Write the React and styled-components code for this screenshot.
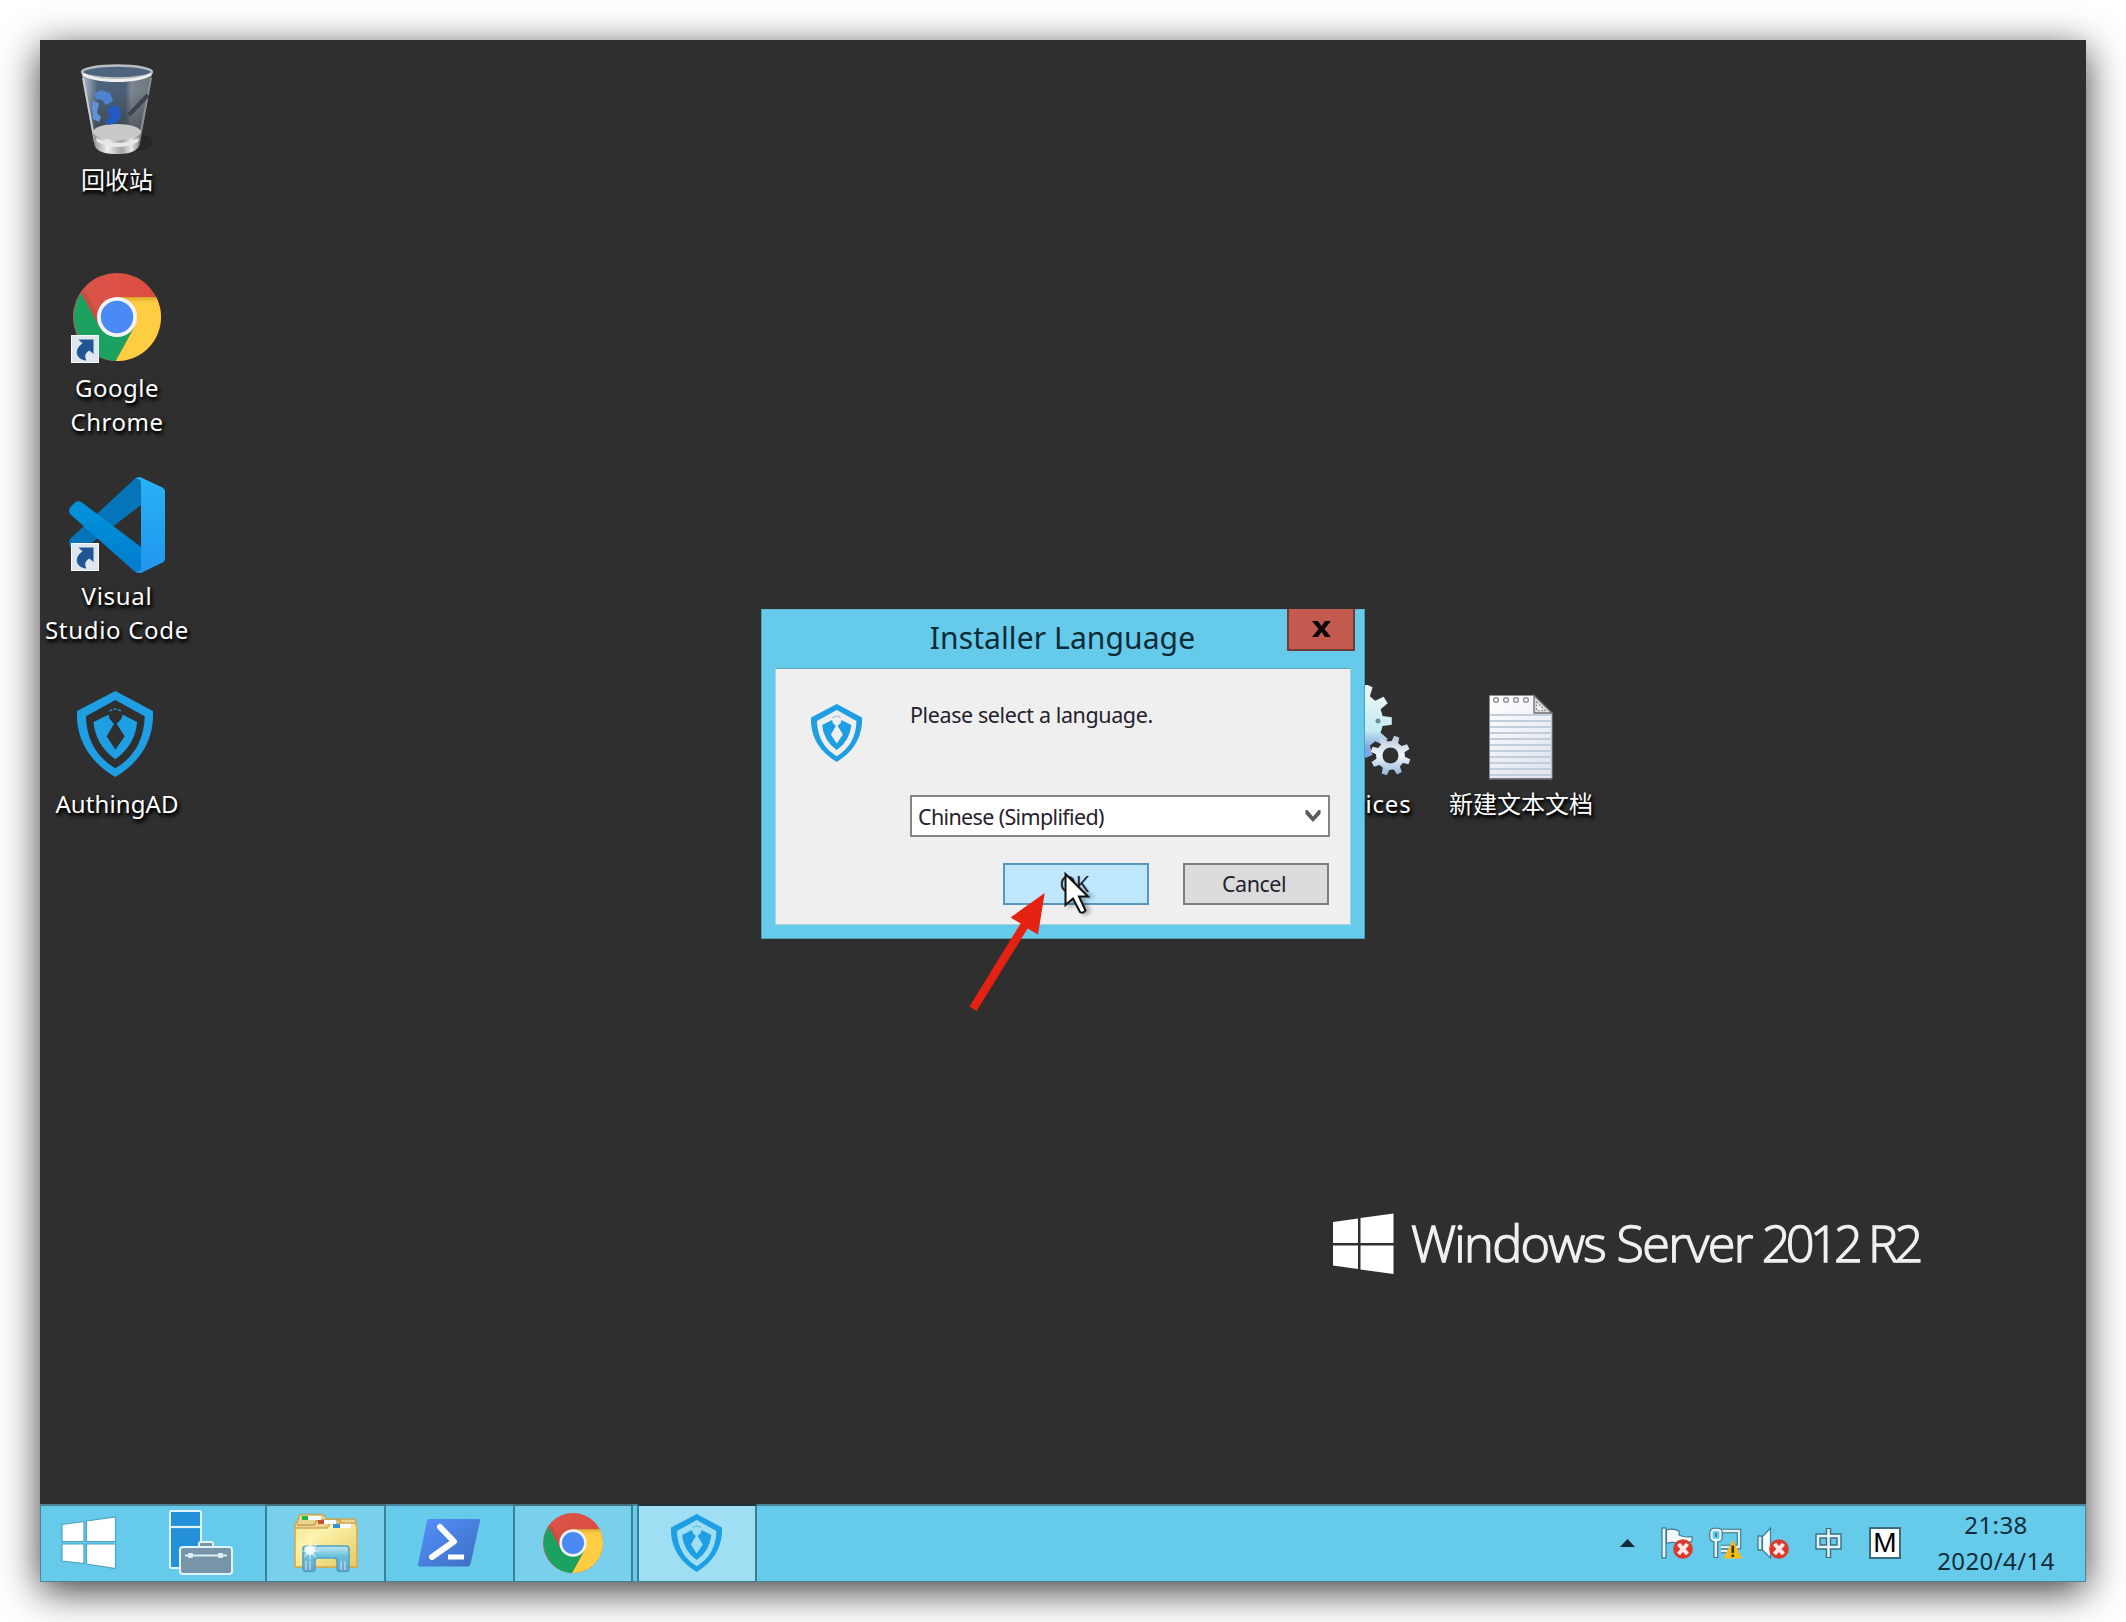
import React from 'react';
import styled, { createGlobalStyle } from 'styled-components';

const GlobalStyle = createGlobalStyle`
  * {
    box-sizing: border-box;
  }
  body {
    margin: 0;
    background-color: #ffffff;
    font-family: 'Noto Sans', 'Noto Sans CJK SC', sans-serif;
    overflow: hidden;
  }
  svg {
    display: block;
  }
`;

const Page = styled.div`
  width: 2126px;
  height: 1622px;
  padding: 40px;
`;

const Screen = styled.div`
  position: relative;
  display: flex;
  flex-direction: column;
  width: 2046px;
  height: 1542px;
  background-color: #2f2f2f;
  box-shadow: 0 9px 37px rgba(0, 0, 0, 0.77);
`;

const Desktop = styled.div`
  flex: 1;
  display: flex;
  flex-direction: column;
  justify-content: space-between;
`;

const IconGrid = styled.div`
  display: grid;
  grid-template-columns: repeat(10, 156px);
  grid-template-rows: repeat(4, 208px);
  padding-top: 21px;
  margin-left: -1px;
`;

const DesktopItem = styled.div`
  grid-column: ${(props) => props.$col};
  grid-row: ${(props) => props.$row};
  display: flex;
  flex-direction: column;
  align-items: center;
  gap: 6px;
`;

const IconBox = styled.div`
  position: relative;
  width: 96px;
  height: 96px;
  padding: ${(props) => props.$pad || 0};
`;

const ShortcutBadge = styled.svg`
  position: absolute;
  left: 2px;
  top: 66px;
`;

const Label = styled.div`
  margin-right: ${(props) => props.$shift || 0}px;
  font-size: 24px;
  line-height: 34px;
  letter-spacing: ${(props) => props.$spacing || '0.5px'};
  color: #ffffff;
  text-align: center;
  white-space: pre;
  text-shadow: 1px 2px 3px #000000, 2px 3px 4px #000000;
`;

const Watermark = styled.div`
  display: flex;
  align-items: center;
  gap: 17px;
  align-self: flex-end;
  margin: 0 168px 225px 0;
  height: 70px;
`;

const WatermarkText = styled.div`
  display: flex;
  font-family: 'Open Sans', 'Noto Sans', sans-serif;
  font-size: 50.5px;
  font-weight: 300;
  line-height: 70px;
  padding-bottom: 2px;
  letter-spacing: -1.7px;
  width: 507px;
  color: #f0f0f0;
  -webkit-text-stroke: 1.3px #f0f0f0;
  white-space: pre;
`;

const Year = styled.span`
  margin-left: 10px;
  letter-spacing: -4.8px;
`;

const Release = styled.span`
  margin-left: 10px;
  letter-spacing: -3.5px;
`;

const Dialog = styled.div`
  position: absolute;
  left: 721px;
  top: 569px;
  width: 604px;
  height: 330px;
  padding: 0 13px 13px;
  display: flex;
  flex-direction: column;
  background-color: #66caea;
  border: 1px solid #4f9db7;
  border-top-color: #5fb9d6;
`;

const TitleBar = styled.div`
  display: flex;
  align-items: flex-start;
  height: 58px;
`;

const Title = styled.div`
  flex: 1;
  padding-left: 63px;
  text-align: center;
  font-size: 30px;
  line-height: 56px;
  letter-spacing: 0.1px;
  white-space: nowrap;
  color: #0a2a36;
`;

const CloseButton = styled.div`
  width: 68px;
  height: 42px;
  margin: -1px -4px 0 0;
  display: flex;
  align-items: center;
  justify-content: center;
  background-color: #c25a50;
  border: 2px solid #733a3a;
  border-top: 0;
`;

const DialogBody = styled.div`
  flex: 1;
  display: flex;
  padding: 35px 20px 0 35px;
  background-color: #efefef;
  border: 1px solid #a9d3df;
  border-top-color: #62a6bb;
`;

const Form = styled.div`
  flex: 1;
  display: flex;
  flex-direction: column;
  margin: -1px 0 0 48px;
`;

const Message = styled.div`
  font-size: 21.5px;
  line-height: 24px;
  letter-spacing: -0.4px;
  color: #26222e;
  white-space: nowrap;
`;

const Select = styled.div`
  display: flex;
  align-items: center;
  justify-content: space-between;
  height: 42px;
  margin-top: 68px;
  padding: 0 7px 0 6px;
  font-size: 21.5px;
  letter-spacing: -0.65px;
  color: #26222e;
  background-color: #ffffff;
  border: 2px solid #858585;
`;

const Buttons = styled.div`
  display: flex;
  justify-content: flex-end;
  gap: 34px;
  margin: 26px 1px 0 0;
`;

const Button = styled.div`
  width: 146px;
  height: 42px;
  padding: 0 4px 2px 0;
  display: flex;
  align-items: center;
  justify-content: center;
  font-size: 21.5px;
  letter-spacing: -0.5px;
  color: #26222e;
  background-color: ${(props) => (props.$hover ? '#bfe7fd' : '#dcdcdc')};
  border: 2px solid ${(props) => (props.$hover ? '#5b97bd' : '#7d7d7d')};
`;

const Pointer = styled.svg`
  position: absolute;
  left: 1024px;
  top: 831px;
`;

const RedArrow = styled.svg`
  position: absolute;
  left: 920px;
  top: 845px;
`;

const Taskbar = styled.div`
  display: flex;
  height: 78px;
  background-color: #66caea;
  border: 1px solid #4c8499;
  border-top-width: 2px;
`;

const TaskItem = styled.div`
  display: flex;
  align-items: center;
  justify-content: center;
  width: ${(props) => props.$width}px;
  padding: 0 2px 2px 0;
`;

const RunningItem = styled(TaskItem)`
  margin: -2px 0 -1px ${(props) => props.$gap || 0}px;
  padding-right: ${(props) => (props.$active ? 2 : 0)}px;
  background-color: ${(props) => (props.$active ? '#9fdef3' : '#78d0ed')};
  border: 2px solid #3a7f96;
  border-top-color: ${(props) => (props.$active ? '#20343c' : '#43707f')};
  border-bottom-width: 1px;
`;

const Tray = styled.div`
  display: flex;
  align-items: center;
  margin-left: auto;
  padding-bottom: 2px;
`;

const TrayIcon = styled.div`
  margin-right: ${(props) => props.$after}px;
`;

const InputMode = styled.div`
  width: 32px;
  height: 32px;
  margin-right: 35px;
  display: flex;
  align-items: center;
  justify-content: center;
  background-color: #ffffff;
  border: 2px solid #3d6b7b;
  font-family: 'Liberation Sans', sans-serif;
  font-size: 28px;
  line-height: 28px;
  color: #000000;
`;

const Clock = styled.div`
  width: 120px;
  margin-right: 29px;
  text-align: center;
  font-size: 24px;
  line-height: 36px;
  letter-spacing: 0.4px;
  color: #0f2d38;
  white-space: nowrap;
`;

// outline of a cog: flat teeth spaced evenly round the centre
function gearPath(cx, cy, outer, inner, teeth, turn = 0) {
  const step = (Math.PI * 2) / teeth;
  const points = [];
  for (let i = 0; i < teeth; i++) {
    const a = i * step + turn;
    [
      [inner, -0.3],
      [outer, -0.17],
      [outer, 0.17],
      [inner, 0.3],
    ].forEach(([r, k]) => {
      const t = a + k * step;
      points.push(`${(cx + r * Math.cos(t)).toFixed(1)} ${(cy + r * Math.sin(t)).toFixed(1)}`);
    });
  }
  return `M${points.join('L')}Z`;
}

function Shortcut() {
  return (
    <ShortcutBadge width="28" height="28" viewBox="0 0 28 28">
      <rect x="0.5" y="0.5" width="27" height="27" fill="#dfe6ee" stroke="#f7f9fb" />
      <path
        d="M7.5 4.5L22.5 4.5L22.5 19L18.500 15.500C14.800 17.500 12.800 20.500 15.500 25.500C9 25 5.500 21 5.800 17C6.500 12.500 8.500 10.500 11.500 8.500Z"
        fill="#205493"
      />
    </ShortcutBadge>
  );
}

function RecycleBin() {
  return (
    <svg width="96" height="96" viewBox="0 -1 96 96">
      <defs>
        <linearGradient id="binBody" x1="0" x2="1" y1="0" y2="0">
          <stop offset="0" stopColor="#aebccb" />
          <stop offset="0.12" stopColor="#7f91a3" />
          <stop offset="0.22" stopColor="#4d647a" />
          <stop offset="0.62" stopColor="#4a6078" />
          <stop offset="0.7" stopColor="#7b8794" />
          <stop offset="1" stopColor="#6f7378" />
        </linearGradient>
        <linearGradient id="binFade" x1="0" x2="0" y1="0" y2="1">
          <stop offset="0.2" stopColor="#303030" stopOpacity="0" />
          <stop offset="0.75" stopColor="#303030" stopOpacity="0.55" />
        </linearGradient>
        <linearGradient id="binBase" x1="0" x2="1" y1="0" y2="0">
          <stop offset="0" stopColor="#8d8d8d" />
          <stop offset="0.3" stopColor="#f0f0f0" />
          <stop offset="0.6" stopColor="#a2a2a2" />
          <stop offset="0.8" stopColor="#e8e8e8" />
          <stop offset="1" stopColor="#777777" />
        </linearGradient>
      </defs>
      <ellipse cx="66" cy="80" rx="18" ry="9" fill="#262626" />
      <path d="M13 12L25 82Q27 92 48 92Q68 92 71 82L83 12Z" fill="url(#binBody)" />
      <path d="M13 12L25 82Q27 92 48 92Q68 92 71 82L83 12Z" fill="url(#binFade)" />
      <path d="M14 16L26 80" stroke="#c7d0d9" strokeWidth="2" fill="none" />
      <path d="M82 16L70 80" stroke="#8d9195" strokeWidth="2" fill="none" />
      <path d="M79 33L60 53" stroke="#3a434e" strokeWidth="4" />
      <path d="M24 72Q48 60 72 72L70 84Q66 92 48 92Q29 92 26 84Z" fill="url(#binBase)" />
      <ellipse cx="48" cy="70" rx="24" ry="8" fill="#c9c9c9" />
      <path d="M27 76Q48 86 70 76L69 80Q48 90 28 80Z" fill="#e9e9e9" />
      <path d="M25 32L32 28L41 31L44 39L37 43L33 38L27 37Z" fill="#4d84d2" />
      <path d="M24 39L30 41L28 51L32 55L30 60L24 57L23 46Z" fill="#5f92d8" />
      <path d="M41 43L50 45L52 54L47 61L39 63L36 59L41 55L39 49Z" fill="#2259c4" />
      <ellipse cx="48" cy="10" rx="35" ry="6.500" fill="#4d647c" stroke="#b9bec3" strokeWidth="2.500" />
      <path d="M14 12Q24 18.500 48 18.500Q72 18.500 82 12" stroke="#efefef" strokeWidth="3" fill="none" />
    </svg>
  );
}

function Chrome({ size, id }) {
  return (
    <svg width={size} height={size} viewBox="0 0 88 88">
      <defs>
        <linearGradient id={`${id}Red`} x1="0" x2="1" y1="0" y2="0.3">
          <stop offset="0" stopColor="#d9564b" />
          <stop offset="1" stopColor="#dd4b3e" />
        </linearGradient>
        <linearGradient id={`${id}Shade`} x1="0" x2="0" y1="0" y2="1">
          <stop offset="0" stopColor="#b98a1f" stopOpacity="0.6" />
          <stop offset="1" stopColor="#ffcd42" stopOpacity="0" />
        </linearGradient>
      </defs>
      <circle cx="44" cy="44" r="44" fill={`url(#${id}Red)`} />
      <path d="M44 24H83.200A44 44 0 0 1 42.500 88L61.300 54Z" fill="#ffcd42" />
      <path d="M44 24H83.200L85 32H62Z" fill={`url(#${id}Shade)`} />
      <path d="M8 20L26.700 54L44 64L61.300 54L42.500 88A44 44 0 0 1 8 20Z" fill="#1ba261" />
      <path d="M8 20L26.700 54L25 42L12 17Z" fill="#a8453b" opacity="0.35" />
      <circle cx="44" cy="44" r="20" fill="#f1f3f6" />
      <circle cx="44" cy="44" r="16.200" fill="#4a8af4" />
    </svg>
  );
}

function VsCode() {
  return (
    <svg width="96" height="96" viewBox="0 0 96 96">
      <defs>
        <linearGradient id="vsSide" x1="0" x2="0" y1="0" y2="1">
          <stop offset="0" stopColor="#28b1f4" />
          <stop offset="1" stopColor="#2196ee" />
        </linearGradient>
        <linearGradient id="vsFront" x1="0" x2="0" y1="0.2" y2="1">
          <stop offset="0" stopColor="#0090d9" />
          <stop offset="1" stopColor="#007bcd" />
        </linearGradient>
      </defs>
      <path d="M66 1.500Q69 0 72 0V28L12 74Q9 77 6 74L1.500 70Q-1 66 1 62Z" fill="#0475b8" />
      <path d="M1 37Q-1 33 1.500 30L6 25.500Q9 23 13 25.500L72 70V96Q68 96 65 94Z" fill="url(#vsFront)" />
      <path d="M66 1.500Q69 -0.500 72 0.500L93.500 10.500Q96 12 96 14V82Q96 84 93.500 85.500L73 95.500Q69 97 65 94Q72 95 72 91V5Q71 1 66 1.500Z" fill="url(#vsSide)" />
    </svg>
  );
}

function Shield({ width, height }) {
  return (
    <svg width={width} height={height} viewBox="0 0 230 258" preserveAspectRatio="none" fill="#1e9fe3">
      <path
        fillRule="evenodd"
        d="M116 0L230 60V85Q222 195 116 258Q8 195 0 85V60ZM116 27L27 76Q30 182 116 232Q202 182 205 76Z"
      />
      <path d="M50 93L95 71L99 84L112 98L90 136L116 176L144 136L120 98L134 84L138 71L182 93Q176 162 116 205Q56 162 50 93Z" />
      <path d="M98 61Q116 48 134 61" fill="none" stroke="#1e9fe3" strokeWidth="4" strokeDasharray="9 5" />
    </svg>
  );
}

function Gears() {
  return (
    <svg width="96" height="96" viewBox="0 0 96 96">
      <defs>
        <linearGradient id="gearBig" x1="0" x2="0" y1="0" y2="1">
          <stop offset="0.2" stopColor="#e4f4f6" />
          <stop offset="0.62" stopColor="#c3ecf2" />
          <stop offset="0.85" stopColor="#7fa6e0" />
        </linearGradient>
        <linearGradient id="gearSmall" x1="0" x2="0" y1="0" y2="1">
          <stop offset="0" stopColor="#b9c8dc" />
          <stop offset="0.5" stopColor="#f1f6fb" />
          <stop offset="1" stopColor="#8fb4dd" />
        </linearGradient>
      </defs>
      <path d={gearPath(36, 36, 39, 30, 11, 0)} fill="url(#gearBig)" />
      <circle cx="61" cy="36" r="2.500" fill="#6d8f93" />
      <path d={gearPath(73.5, 70.5, 20, 14.5, 8, 0.32)} fill="url(#gearSmall)" />
      <circle cx="73.500" cy="70.500" r="8" fill="#2f2f2f" />
    </svg>
  );
}

function TextFile() {
  const lines = [];
  for (let y = 30; y < 92; y += 6) lines.push(y);
  return (
    <svg width="96" height="96" viewBox="0 0 96 96">
      <defs>
        <linearGradient id="paper" x1="0" x2="0.6" y1="0" y2="1">
          <stop offset="0" stopColor="#ffffff" />
          <stop offset="1" stopColor="#e2e6ef" />
        </linearGradient>
      </defs>
      <path d="M16.500 10.500H61L79 28V93.500H16.500Z" fill="url(#paper)" stroke="#8c8f94" strokeWidth="1" />
      {lines.map((y) => (
        <path key={y} d={`M17 ${y}H78.500`} stroke="#c0cedb" strokeWidth="1.800" />
      ))}
      <path d="M16 94H79" stroke="#6c6f73" strokeWidth="1.500" />
      {[23, 33, 43, 53].map((x) => (
        <circle key={x} cx={x} cy="15" r="2.400" fill="#f2f2f2" stroke="#8a8d91" strokeWidth="1.300" />
      ))}
      <path d="M61 10.500L79 28H61Z" fill="#dddddd" stroke="#6d6d6d" strokeWidth="1.300" />
      <path d="M63.500 17L72 25.500H63.500Z" fill="#f4f4f4" stroke="#8f8f8f" strokeWidth="1.200" strokeDasharray="2 1.500" />
    </svg>
  );
}

function ServerManager() {
  return (
    <svg width="64" height="65" viewBox="0 0 64 65">
      <rect x="1" y="1" width="31" height="57" rx="1.500" fill="#2490da" stroke="#dff4fc" strokeWidth="2" />
      <path d="M2 17H31" stroke="#dff4fc" strokeWidth="2.200" />
      <path d="M30 37V33.500Q30 32 32 32H42Q44 32 44 33.500V37" fill="#7794a8" stroke="#dff4fc" strokeWidth="2" />
      <rect x="11" y="37" width="52" height="27" rx="3" fill="#7794a8" stroke="#dff4fc" strokeWidth="2" />
      <path d="M16 45.500H58" stroke="#dceff6" strokeWidth="2" />
      <rect x="19" y="43" width="5" height="5" rx="1" fill="#dceff6" />
      <rect x="49" y="43" width="5" height="5" rx="1" fill="#dceff6" />
    </svg>
  );
}

function Explorer() {
  return (
    <svg width="64" height="60" viewBox="0 0 64 60">
      <defs>
        <linearGradient id="folder" x1="0" x2="1" y1="0" y2="1">
          <stop offset="0" stopColor="#f6e48f" />
          <stop offset="0.3" stopColor="#fdf4ae" />
          <stop offset="1" stopColor="#e6c75b" />
        </linearGradient>
        <linearGradient id="stand" x1="0" x2="0" y1="0" y2="1">
          <stop offset="0" stopColor="#bfe9f3" />
          <stop offset="0.4" stopColor="#6cc0dc" />
          <stop offset="1" stopColor="#6d9fc6" />
        </linearGradient>
      </defs>
      <path d="M1 54V10H3L5 3Q6 1.500 8 1.500H29L33 6H59Q62 6 62 9V54Z" fill="#e9d58c" stroke="#c8a75a" strokeWidth="1.500" />
      <path d="M3 12H20L23 7H45L49 11H61" fill="none" stroke="#c39f57" strokeWidth="1.500" />
      <path d="M1 15H33L37 10H59Q63 10 63 15V54H1Z" fill="url(#folder)" stroke="#cfa955" strokeWidth="1.500" />
      <rect x="8" y="3" width="19" height="4" fill="#ffffff" />
      <rect x="8" y="3" width="6" height="4" fill="#20b63a" />
      <rect x="24" y="7" width="18" height="4" fill="#ffffff" />
      <rect x="24" y="7" width="6" height="4" fill="#c8502f" />
      <rect x="39" y="11" width="18" height="4" fill="#ffffff" />
      <rect x="39" y="11" width="7" height="4" fill="#2f93d8" />
      <path
        d="M9 36Q9 33 12 33H52Q55 33 55 36V56Q55 58.500 52 58.500H46Q43 58.500 43 56V48Q43 45 40 45H24Q21 45 21 48V56Q21 58.500 18 58.500H12Q9 58.500 9 56Z"
        fill="url(#stand)"
        stroke="#4aa3c4"
        strokeWidth="1.500"
      />
      <path d="M12 48V57M16 48V57M47 48V57M51 48V57" stroke="#a7d3e6" strokeWidth="1.500" />
      <circle cx="16" cy="37" r="5" fill="#ffffff" opacity="0.75" />
      <path d="M16 22L17 35L25 29L18.500 37L28 38L18.500 39L24 46L17 41L16 50L15 41L9 45L13.500 39L6 38L13.500 37L9 30L15 35Z" fill="#ffffff" opacity="0.6" />
    </svg>
  );
}

function PowerShell() {
  return (
    <svg width="64" height="50" viewBox="0 0 64 50">
      <defs>
        <linearGradient id="psBlue" x1="0" x2="1" y1="0" y2="1">
          <stop offset="0" stopColor="#5391fe" />
          <stop offset="1" stopColor="#3e6dbf" />
        </linearGradient>
      </defs>
      <path d="M12 1H61Q63.500 1 63 3L53.500 46Q53 48.500 50 48.500H3Q0.500 48.500 1 46L10 3Q10.500 1 12 1Z" fill="url(#psBlue)" />
      <path d="M23 9L37 23.500L15 39" fill="none" stroke="#ffffff" strokeWidth="6" strokeLinecap="round" strokeLinejoin="round" />
      <path d="M31 39H47" stroke="#ffffff" strokeWidth="5" />
    </svg>
  );
}

function WindowsLogo() {
  return (
    <svg width="61" height="62" viewBox="0 0 61 62">
      <path d="M0 9L25 5.500V30H0ZM27.500 5L60.500 0.500V30H27.500ZM0 32.500H25V56L0 52.500ZM27.500 32.500H60.500V61L27.500 56.500Z" fill="#ffffff" />
    </svg>
  );
}

function StartLogo() {
  return (
    <svg width="56" height="54" viewBox="0 0 56 54">
      <path
        d="M1 8.500L23 5.500V25.500H1ZM25.500 5L54.500 1V25.500H25.500ZM1 28H23V47.500L1 45ZM25.500 28H54.500V52.500L25.500 48Z"
        fill="#ffffff"
        stroke="#4fa3bf"
        strokeWidth="1.200"
      />
    </svg>
  );
}

function ErrorMark({ x, y }) {
  return (
    <g transform={`translate(${x} ${y})`}>
      <circle r="9.800" fill="#dc3a2f" />
      <path d="M-4.500 -5L4.500 5M4.500 -5L-4.500 5" stroke="#fbe9e7" strokeWidth="4" />
    </g>
  );
}

function FlagIcon() {
  return (
    <svg width="32" height="32" viewBox="0 0 32 32">
      <rect x="1" y="1" width="4" height="30" fill="#e8f5fa" stroke="#3f7d92" strokeWidth="1.300" />
      <path d="M5.500 3Q12 1 18 4V8Q24 11 31 9.500V14Q27 17 19 15.500V17Q12 14 5.500 16.500Z" fill="#f4fafc" stroke="#3f7d92" strokeWidth="1.200" />
      <ErrorMark x={22} y={22} />
    </svg>
  );
}

function NetworkIcon() {
  return (
    <svg width="33" height="32" viewBox="0 0 33 32">
      <path d="M12 4H30V20H12M12 24H21" fill="none" stroke="#3f7180" strokeWidth="4.500" />
      <path d="M12 4H30V20H12M12 24H21" fill="none" stroke="#def1f8" strokeWidth="2.300" />
      <path d="M6.800 14V31" stroke="#3f7180" strokeWidth="5" />
      <rect x="2.500" y="3" width="9" height="10" rx="2.500" fill="#66caea" stroke="#3f7180" strokeWidth="4.500" />
      <path d="M6.800 13V30" stroke="#def1f8" strokeWidth="2.600" />
      <rect x="2.500" y="3" width="9" height="10" rx="2.500" fill="#66caea" stroke="#def1f8" strokeWidth="2.300" />
      <path d="M7 5.500V10" stroke="#3f7180" strokeWidth="1.500" />
      <path d="M24 13L33 31.500H14.500Z" fill="#f6bd16" />
      <path d="M23.800 18.500V26M23.800 27.500V30" stroke="#3c3415" strokeWidth="2.600" />
    </svg>
  );
}

function SpeakerIcon() {
  return (
    <svg width="32" height="32" viewBox="0 0 32 32">
      <path d="M1 9H5V23H1Z" fill="#dcf0f8" stroke="#3f7d92" strokeWidth="1.300" />
      <path d="M5.500 9.500L13.500 1V31L5.500 23Z" fill="#f6fbfd" stroke="#3f7d92" strokeWidth="1.200" />
      <ErrorMark x={22} y={22} />
    </svg>
  );
}

// input method indicator: an outlined box crossed by a bar
function ImeIcon() {
  return (
    <svg width="27" height="32" viewBox="0 0 27 32">
      <path d="M3 9H24V20H3ZM13.500 1V31" fill="none" stroke="#3b6f80" strokeWidth="5.400" />
      <path d="M3 9H24V20H3ZM13.500 2V30" fill="none" stroke="#e2f3f9" strokeWidth="2.600" />
    </svg>
  );
}

function App() {
  return (
    <Page>
      <GlobalStyle />
      <Screen>
        <Desktop>
          <IconGrid>
            <DesktopItem $col={1} $row={1}>
              <IconBox>
                <RecycleBin />
              </IconBox>
              <Label $spacing="0">回收站</Label>
            </DesktopItem>
            <DesktopItem $col={1} $row={2}>
              <IconBox $pad="4px">
                <Chrome size={88} id="desk" />
                <Shortcut />
              </IconBox>
              <Label>{'Google\nChrome'}</Label>
            </DesktopItem>
            <DesktopItem $col={1} $row={3}>
              <IconBox>
                <VsCode />
                <Shortcut />
              </IconBox>
              <Label $spacing="0.7px">{'Visual\nStudio Code'}</Label>
            </DesktopItem>
            <DesktopItem $col={1} $row={4}>
              <IconBox $pad="6px 8px">
                <Shield width={76} height={86} />
              </IconBox>
              <Label $spacing="0.1px">AuthingAD</Label>
            </DesktopItem>
            <DesktopItem $col={9} $row={4}>
              <IconBox>
                <Gears />
              </IconBox>
              <Label $spacing="0.8px" $shift={5}>Services</Label>
            </DesktopItem>
            <DesktopItem $col={10} $row={4}>
              <IconBox>
                <TextFile />
              </IconBox>
              <Label $spacing="0">新建文本文档</Label>
            </DesktopItem>
          </IconGrid>
          <Watermark>
            <WindowsLogo />
            <WatermarkText>
              Windows Server
              <Year>2012</Year>
              <Release>R2</Release>
            </WatermarkText>
          </Watermark>
        </Desktop>

        <Taskbar>
          <TaskItem $width={97}>
            <StartLogo />
          </TaskItem>
          <TaskItem $width={127}>
            <ServerManager />
          </TaskItem>
          <RunningItem $width={121}>
            <Explorer />
          </RunningItem>
          <TaskItem $width={127}>
            <PowerShell />
          </TaskItem>
          <RunningItem $width={120}>
            <Chrome size={60} id="task" />
          </RunningItem>
          <RunningItem $width={120} $gap={4} $active>
            <Shield width={51} height={58} />
          </RunningItem>
          <Tray>
            <TrayIcon $after={26}>
              <svg width="15" height="8" viewBox="0 0 15 8">
                <path d="M7.500 0L15 8H0Z" fill="#122b34" />
              </svg>
            </TrayIcon>
            <TrayIcon $after={16}>
              <FlagIcon />
            </TrayIcon>
            <TrayIcon $after={15}>
              <NetworkIcon />
            </TrayIcon>
            <TrayIcon $after={26}>
              <SpeakerIcon />
            </TrayIcon>
            <TrayIcon $after={27}>
              <ImeIcon />
            </TrayIcon>
            <InputMode>M</InputMode>
            <Clock>
              <div>21:38</div>
              <div>2020/4/14</div>
            </Clock>
          </Tray>
        </Taskbar>

        <Dialog>
          <TitleBar>
            <Title>Installer Language</Title>
            <CloseButton>
              <svg width="19" height="16" viewBox="0 0 19 16">
                <path d="M0 0H6L9.500 5L13 0H19L12.500 8L19 16H13L9.500 11L6 16H0L6.500 8Z" fill="#0d0606" />
              </svg>
            </CloseButton>
          </TitleBar>
          <DialogBody>
            <Shield width={51} height={58} />
            <Form>
              <Message>Please select a language.</Message>
              <Select>
                Chinese (Simplified)
                <svg width="16" height="14" viewBox="0 0 16 14">
                  <path d="M0.500 1V5L8 13L15.500 5V1L13.500 1L8 7.500L2.500 1Z" fill="#5c5c5c" />
                </svg>
              </Select>
              <Buttons>
                <Button $hover>OK</Button>
                <Button>Cancel</Button>
              </Buttons>
            </Form>
          </DialogBody>
        </Dialog>

        <Pointer width="40" height="52" viewBox="0 0 40 52">
          <path d="M5 6V38L12 31.500L20 45L27 41L20 27H31Z" fill="#000000" opacity="0.3" style={{ filter: 'blur(2px)' }} />
          <path d="M1.500 3V34L9 27.500L16 41Q19 43 21.500 39.500L15 25.500H24Z" fill="#ffffff" stroke="#101010" strokeWidth="2" />
        </Pointer>
        <RedArrow width="90" height="130" viewBox="0 0 90 130">
          <path d="M84.700 8L50.600 32.500L60.600 38.500L9.500 121.500L16.600 126L67.600 43.500L78 49.500Z" fill="#e52212" />
        </RedArrow>
      </Screen>
    </Page>
  );
}

export default App;
